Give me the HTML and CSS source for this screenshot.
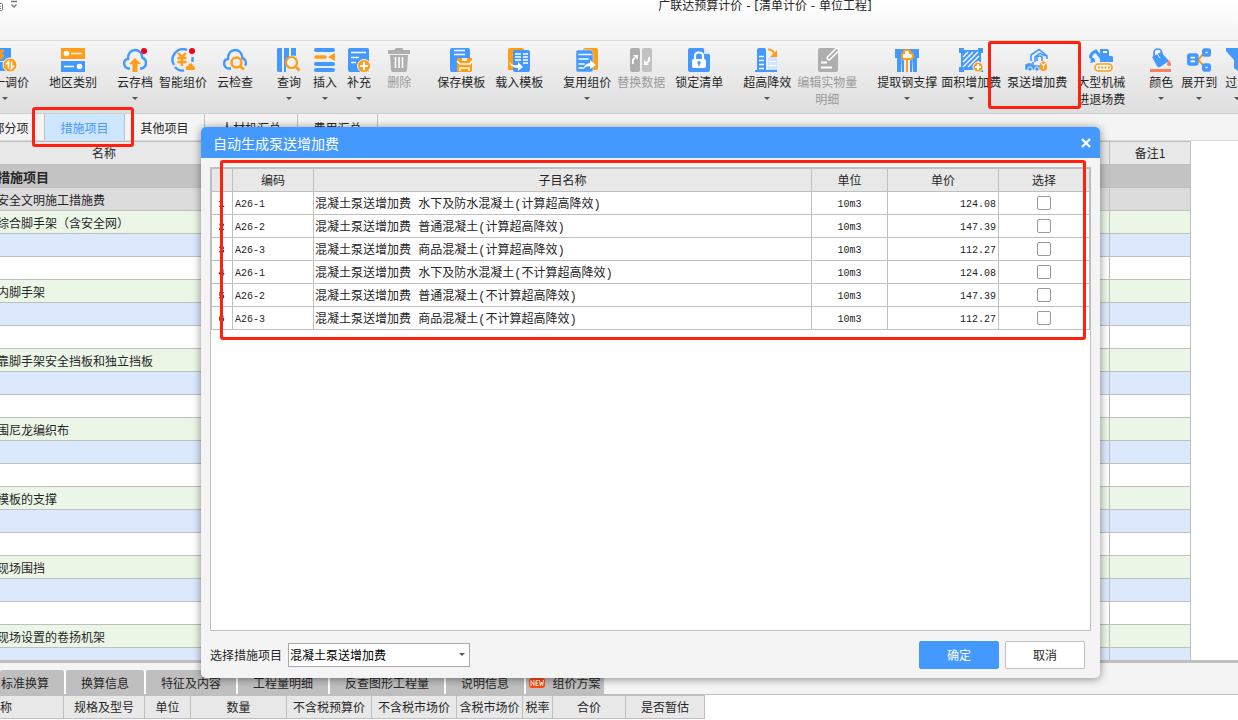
FILE: index.html
```html
<!DOCTYPE html>
<html lang="zh-CN">
<head>
<meta charset="utf-8">
<title>广联达预算计价</title>
<link rel="stylesheet" href="styles.css">
</head>
<body>
<div class="app">
  <header class="titlebar">
    <svg class="quick" width="24" height="12" viewBox="0 0 24 12" fill="none" stroke="#777"><path d="M0 3.500h1.500q1 0 1 1v5q0 1-1 1H0M0 6.500h1M0 8.500h1"/><path d="M11 1.500h6M11.500 4.500l2.500 2.500 2.500-2.500" stroke-width="1.300"/></svg>
    <h1>广联达预算计价 - [清单计价 - 单位工程]</h1>
  </header>

  <nav class="toolbar" aria-label="工具栏">
    <button class="tool first drop"><svg viewBox="0 0 24 24"><path fill="#49f" d="M2 0h16v13H2zM2 14h12v9H2z"/><path d="M4 3h7M4 8h7M8 3v8" stroke="#ff9d17" stroke-width="2.400" fill="none"/><circle cx="17" cy="17" r="7" fill="#ff9d17" stroke="#f3f3f3"/><path d="M15.500 20.500v-7l-2.500 3M18.500 13.500v7l2.500-3" stroke="#fff" stroke-width="1.600" fill="none"/></svg><span>统一调价</span></button>
    <button class="tool g20"><svg viewBox="0 0 24 24"><path fill="#ff9d17" d="M0 0h24v11H0z"/><path fill="#49f" d="M0 13h24v11H0z"/><circle cx="5.500" cy="5.500" r="2.800" fill="#fff"/><circle cx="18.500" cy="18.500" r="2.800" fill="#fff"/><path d="M10 5.500h11M3 18.500h10" stroke="#fff" stroke-width="1.600"/></svg><span>地区类别</span></button>
    <button class="tool g20 drop"><svg viewBox="0 0 24 24"><path d="M7 20.500H5.500C-.5 19 0 11.500 5 11 5 5 8 2 12 2s7 3 7.500 8c4.500 1 5 9-1 10.500H17" fill="none" stroke="#49f" stroke-width="2.400"/><path fill="#ff9d17" d="M12 10l6 6h-3.500v8h-5v-8H6z"/><circle cx="21" cy="3" r="3" fill="#f00012"/></svg><span>云存档</span></button>
    <button class="tool g6"><svg viewBox="0 0 24 24"><g fill="none" stroke="#49f" stroke-width="2.400"><path d="M16 2A10.500 10.500 0 0 0 3 17M4 19a10 10 0 0 0 9 3.500M21.500 9v5"/></g><path d="M7 5l4 4 4-4M6.500 10h9M6.500 14h9M11 9v9" fill="none" stroke="#ff9d17" stroke-width="2.400"/><path fill="#ff9d17" d="M15 22c-1-4 1-4 2-4 1-4 5-3 5 0 3 0 2 4 1 4z"/><circle cx="21" cy="3" r="3" fill="#f00012"/></svg><span>智能组价</span></button>
    <button class="tool g10"><svg viewBox="0 0 24 24"><path d="M8 20.500H5.500C-.5 19 0 11.500 5 11 5 5 8 2 12 2s7 3 7.500 8c3 1 4.500 5 2.500 7.500" fill="none" stroke="#49f" stroke-width="2.400"/><circle cx="13.500" cy="14.500" r="5" fill="none" stroke="#ff9d17" stroke-width="2.400"/><path d="M17 18l4 3.500" stroke="#ff9d17" stroke-width="2.800"/></svg><span>云检查</span></button>
    <button class="tool g24 drop"><svg viewBox="0 0 24 24"><path fill="#49f" d="M0 1q0-1 2-1h3v24H2q-2 0-2-1zM7 0h5v10l-3 5v9H7zM14 0h5v8q-3-1-5 0z"/><circle cx="14.500" cy="14.500" r="5.500" fill="#f3f3f3" stroke="#ff9d17" stroke-width="2.200"/><path d="M18.500 18.500l4 4" stroke="#ff9d17" stroke-width="2.800"/></svg><span>查询</span></button>
    <button class="tool g12 drop"><svg viewBox="0 0 24 24"><path d="M3 2h17M3 16h17M3 22h17" stroke="#49f" stroke-width="4" stroke-linecap="round"/><path d="M3 9h9" stroke="#ff9d17" stroke-width="3.500" stroke-linecap="round"/><path d="M15 9l7-4v8z" fill="#ff9d17"/></svg><span>插入</span></button>
    <button class="tool g10 drop"><svg viewBox="0 0 24 24"><rect x="1" width="21" height="24" rx="2" fill="#49f"/><path d="M4 4.500h15M4 9.500h8M4 14.500h5" stroke="#fff" stroke-width="1.500"/><circle cx="17" cy="18" r="6.500" fill="#ff9d17" stroke="#f3f3f3"/><path d="M13 18h8M17 14v8" stroke="#fff" stroke-width="2"/></svg><span>补充</span></button>
    <button class="tool g16" disabled><svg viewBox="0 0 24 24" fill="#aeaeae"><path d="M1 2h6l2-2h6l2 2h6v4H1zM3 7h18l-1 15q0 2-2 2H6q-2 0-2-2z"/><path d="M8.500 9v11M12 9v11M15.500 9v11" stroke="#fff" stroke-width="1.600"/></svg><span>删除</span></button>
    <button class="tool g26"><svg viewBox="0 0 24 24"><path fill="#49f" d="M1 2q0-2 2-2h16q2 0 2 2v8H9v14H3q-2 0-2-2z"/><path d="M5 2.500h11M5 6.500h11" stroke="#fff" stroke-width="1.600"/><path fill="#ff9d17" d="M8 10h5v3h5v-3h5v7H8zM8 17h15v6l-1 1H9l-1-1z"/><path d="M8 13l3 3h10l2-3M11 23v-3h9v3" stroke="#fff" stroke-width="1.600" fill="none"/></svg><span>保存模板</span></button>
    <button class="tool g10"><svg viewBox="0 0 24 24"><path fill="#ff9d17" d="M1 2q0-2 2-2h12q2 0 2 2v20H1z"/><rect x="6" y="2" width="17" height="22" rx="2" fill="#49f"/><path d="M8 6h6M16 6h5M8 9h6M16 9h5M8 12h6M16 12h5M16 15h5" stroke="#fff" stroke-width="1.700"/><path d="M2 13q2 5 9 4v-3l5 5-5 4v-3Q3 20 2 13z" fill="#fff"/></svg><span>载入模板</span></button>
    <button class="tool g20 drop"><svg viewBox="0 0 24 24"><rect x="8" width="15" height="22" rx="2" fill="#ff9d17"/><path fill="#49f" stroke="#f3f3f3" stroke-width=".5" d="M1 4q0-2 2-2h13l2 2v18q0 2-2 2H3q-2 0-2-2z"/><path d="M4 6.500h12M4 11h9M4 16h5M4 20h4" stroke="#fff" stroke-width="1.600" stroke-linecap="round"/><path d="M8 21q2-6 7-6v-3l6 5-6 4v-3q-4 0-7 3z" fill="#fff"/></svg><span>复用组价</span></button>
    <button class="tool g6" disabled><svg viewBox="0 0 24 24"><rect x="1" width="10" height="24" rx="2" fill="#aeaeae"/><rect x="13" width="10" height="24" rx="2" fill="#c2c2c2"/><path d="M4 16q-1-5 2-6M20 9q1 5-3 6" stroke="#fff" stroke-width="2" fill="none"/><path d="M4 7h5v5zM15 17v-5l5 5z" fill="#fff"/></svg><span>替换数据</span></button>
    <button class="tool g10"><svg viewBox="0 0 24 24"><path fill="#49f" d="M1 2q0-2 2-2h13l7 7v15q0 2-2 2H3q-2 0-2-2z"/><path fill="#d5e8ff" d="M17 0l6 6h-6z"/><rect x="5" y="11" width="14" height="9" rx="2" fill="#fff"/><path d="M8 12V8q0-3.500 4-3.500T16 8v4" fill="none" stroke="#fff" stroke-width="2.200"/><circle cx="12" cy="14.500" r="1.600" fill="#49f"/><path d="M12 15v3" stroke="#49f" stroke-width="1.500"/></svg><span>锁定清单</span></button>
    <button class="tool g20 drop"><svg viewBox="0 0 24 24"><path fill="#49f" d="M2 2q0-2 2-2h5q2 0 2 2v21H2z"/><path d="M4 8.500h5M4 12.500h5M4 16.500h5M4 20.500h5" stroke="#fff" stroke-width="1.600"/><path fill="#cde5ff" d="M13 11q0-2 2-2h5q2 0 2 2v12h-9z"/><path d="M14 13.500h7M14 17.500h7" stroke="#fff"/><path d="M0 23h22" stroke="#49f" stroke-width="2"/><path d="M13 1.500q5 0 6 4" fill="none" stroke="#ff9d17" stroke-width="2"/><path d="M22 2v7h-7z" fill="#ff9d17"/></svg><span>超高降效</span></button>
    <button class="tool g6" disabled><svg viewBox="0 0 24 24"><rect x="3" width="20" height="24" rx="2" fill="#aeaeae"/><path d="M6 14.500h6M6 19.500h11" stroke="#fff" stroke-width="1.800"/><path d="M14 10l8-8" stroke="#fff" stroke-width="5" stroke-linecap="round"/><path d="M14 10l8-8" stroke="#aeaeae" stroke-width="2" stroke-linecap="round"/></svg><span>编辑实物量<br>明细</span></button>
    <button class="tool g20 drop"><svg viewBox="0 0 24 24"><path fill="#49f" d="M0 1h24v9h-2v14h-4V9H6v15H2V10H0z"/><path fill="#49f" d="M6 8l3 5v11H7zM18 8l-3 5v11h2z"/><path d="M7 7q0-2 2-2V3q3-2 6 0v2q3 0 3 3t-3 3H9q-2 0-2-3z" fill="#fff" stroke="#ff9d17" stroke-width="2"/><path d="M12 11v13" stroke="#ff9d17" stroke-width="2"/></svg><span>提取钢支撑</span></button>
    <button class="tool g4 drop"><svg viewBox="0 0 24 24"><path fill="#49f" d="M0 0h5v2h14V0h5v5h-2v14h2v5h-5v-2H5v2H0v-5h2V5H0z"/><path d="M4 9l5-5M4 14L14 4M4 19L19 4M9 19L20 8M14 19l6-6" stroke="#fff" stroke-width="1.400"/><circle cx="19" cy="19" r="5" fill="#ff9d17" stroke="#f0f0f0"/><path d="M16 19h6M19 16v6" stroke="#fff" stroke-width="2"/></svg><span>面积增加费</span></button>
    <button class="tool g6"><svg viewBox="0 0 24 24" fill="none" stroke="#49f" stroke-width="1.600"><path d="M6 13V7l8-5.500L22 8v3M22 8l-5-1.500q-2-2-4 0L10 9v5M12 13V9q3-2 5 0v4"/><path fill="#49f" d="M1 21v-4l2-1h3v2h8v3z"/><path d="M8 14v4"/><circle cx="5" cy="21" r="2.200" fill="#49f" stroke="#f0f0f0" stroke-width="1"/><circle cx="12" cy="21" r="2.200" fill="#49f" stroke="#f0f0f0" stroke-width="1"/><path d="M18.500 13c-6 3-5 10 0 10s5-7 0-10z" fill="#ff9d17" stroke="none"/><path d="M16.500 15.500l2 2 2-2M18.500 17v4" stroke="#fff" stroke-width="1.200"/></svg><span>泵送增加费</span></button>
    <button class="tool g10"><svg viewBox="0 0 24 24"><path fill="#49f" d="M11 1h7q2 0 2 2v5h3q1 0 1 2v4H11z"/><path d="M14 4h4" stroke="#fff" stroke-width="2"/><path d="M13 11L7 3Q2 5 1 10" fill="none" stroke="#49f" stroke-width="3"/><path d="M0 9q7 0 6 5l-5 1q2-3-1-6z" fill="#49f"/><rect x="6" y="16" width="17" height="7" rx="3.500" fill="#fff" stroke="#ff9d17" stroke-width="1.600"/><path d="M9 19.500h12" stroke="#ff9d17" stroke-width="2" stroke-dasharray="2 1.300"/></svg><span>大型机械<br>进退场费</span></button>
    <button class="tool g24 drop"><svg viewBox="0 0 24 24"><path d="M5 10V5q0-4 4-4t4 6" stroke="#49f" stroke-width="1.700" fill="none"/><path fill="#49f" d="M3 9l9-5 8 9-9 6q-2 1-3-1z"/><path d="M7 4l4 6" stroke="#fff"/><path d="M1 22.500h21" stroke="#fb7d62" stroke-width="3"/><path d="M20 12q4 6 0 6t0-6" fill="#fb7d62"/></svg><span>颜色</span></button>
    <button class="tool g8 drop"><svg viewBox="0 0 24 24"><path d="M11 12L18 4M11 12l7 7" stroke="#ff9d17" stroke-width="2"/><g fill="#fff" stroke="#49f" stroke-width="3.600"><rect x="1.800" y="7" width="8" height="9" rx="1"/><rect x="16.800" y="2" width="5.500" height="5" rx="1"/><rect x="16.800" y="17" width="5.500" height="5" rx="1"/></g><path d="M3 11.500h6" stroke="#49f" stroke-width="2"/></svg><span>展开到</span></button>
    <button class="tool g8 drop"><svg viewBox="0 0 24 24"><path fill="#49f" d="M1 0h22v3l-8 9v12l-6-4v-8L1 3z"/></svg><span>过滤</span></button>
  </nav>

  <nav class="tabs" aria-label="页签">
    <button class="tab cut">分部分项</button><button class="tab active">措施项目</button><button class="tab">其他项目</button><button class="tab long">人材机汇总</button><button class="tab">费用汇总</button>
  </nav>

  <main class="sheet">
    <table class="grid">
      <colgroup><col class="c-name"><col><col class="c-note"></colgroup>
      <thead><tr><th>名称</th><th></th><th>备注1</th></tr></thead>
      <tbody>
        <tr class="total"><td>措施项目</td><td></td><td></td></tr>
        <tr class="group"><td>安全文明施工措施费</td><td></td><td></td></tr>
        <tr class="item"><td>综合脚手架（含安全网）</td><td></td><td></td></tr>
        <tr class="sub"><td></td><td></td><td></td></tr>
        <tr><td></td><td></td><td></td></tr>
        <tr class="item"><td>内脚手架</td><td></td><td></td></tr>
        <tr class="sub"><td></td><td></td><td></td></tr>
        <tr><td></td><td></td><td></td></tr>
        <tr class="item"><td>靠脚手架安全挡板和独立挡板</td><td></td><td></td></tr>
        <tr class="sub"><td></td><td></td><td></td></tr>
        <tr><td></td><td></td><td></td></tr>
        <tr class="item"><td>围尼龙编织布</td><td></td><td></td></tr>
        <tr class="sub"><td></td><td></td><td></td></tr>
        <tr><td></td><td></td><td></td></tr>
        <tr class="item"><td>模板的支撑</td><td></td><td></td></tr>
        <tr class="sub"><td></td><td></td><td></td></tr>
        <tr><td></td><td></td><td></td></tr>
        <tr class="item"><td>现场围挡</td><td></td><td></td></tr>
        <tr class="sub"><td></td><td></td><td></td></tr>
        <tr><td></td><td></td><td></td></tr>
        <tr class="item"><td>现场设置的卷扬机架</td><td></td><td></td></tr>
        <tr class="sub"><td></td><td></td><td></td></tr>
      </tbody>
    </table>
  </main>

  <section class="detail">
    <nav class="subtabs" aria-label="明细页签">
      <button class="subtab w-first">标准换算</button><button class="subtab">换算信息</button><button class="subtab w-mid">特征及内容</button><button class="subtab w-mid">工程量明细</button><button class="subtab w-wide">反查图形工程量</button><button class="subtab">说明信息</button><button class="subtab"><svg class="new" width="16" height="10" viewBox="0 0 16 10"><rect width="16" height="10" rx="3" fill="#ff4a0c"/><path d="M2 8V2.500L5 7.500V2M9.500 2.500H7v5h2.500M7 5h2M10.500 2l1 5.500L12.500 4l1 3.500 1-5.500" fill="none" stroke="#fff"/></svg>组价方案</button>
    </nav>
    <table class="columns">
      <colgroup><col class="w126"><col class="w81"><col class="w46"><col class="w96"><col class="w85"><col class="w85"><col class="w66"><col class="w30"><col class="w73"><col class="w79"></colgroup>
      <thead><tr><th>名称</th><th>规格及型号</th><th>单位</th><th>数量</th><th>不含税预算价</th><th>不含税市场价</th><th>含税市场价</th><th>税率</th><th>合价</th><th>是否暂估</th></tr></thead>
    </table>
  </section>

  <div class="dialog" role="dialog" aria-labelledby="dlg-title">
    <div class="dialog-head">
      <h2 id="dlg-title">自动生成泵送增加费</h2>
      <button class="close" aria-label="关闭"><svg width="10" height="10" viewBox="0 0 10 10"><path d="M1 1l8 8M9 1L1 9" stroke="#fff" stroke-width="2.400"/></svg></button>
    </div>
    <div class="dialog-body">
      <div class="panel">
        <table class="fees">
          <colgroup><col class="f-no"><col class="f-code"><col><col class="f-unit"><col class="f-price"><col class="f-pick"></colgroup>
          <thead><tr><th></th><th>编码</th><th>子目名称</th><th>单位</th><th>单价</th><th>选择</th></tr></thead>
          <tbody>
            <tr><td class="no">1</td><td class="mono">A26-1</td><td>混凝土泵送增加费 水下及防水混凝土(计算超高降效)</td><td class="mono mid">10m3</td><td class="mono num">124.08</td><td class="pick"><input type="checkbox" aria-label="选择第1行"></td></tr>
            <tr><td class="no">2</td><td class="mono">A26-2</td><td>混凝土泵送增加费 普通混凝土(计算超高降效)</td><td class="mono mid">10m3</td><td class="mono num">147.39</td><td class="pick"><input type="checkbox" aria-label="选择第2行"></td></tr>
            <tr><td class="no">3</td><td class="mono">A26-3</td><td>混凝土泵送增加费 商品混凝土(计算超高降效)</td><td class="mono mid">10m3</td><td class="mono num">112.27</td><td class="pick"><input type="checkbox" aria-label="选择第3行"></td></tr>
            <tr><td class="no">4</td><td class="mono">A26-1</td><td>混凝土泵送增加费 水下及防水混凝土(不计算超高降效)</td><td class="mono mid">10m3</td><td class="mono num">124.08</td><td class="pick"><input type="checkbox" aria-label="选择第4行"></td></tr>
            <tr><td class="no">5</td><td class="mono">A26-2</td><td>混凝土泵送增加费 普通混凝土(不计算超高降效)</td><td class="mono mid">10m3</td><td class="mono num">147.39</td><td class="pick"><input type="checkbox" aria-label="选择第5行"></td></tr>
            <tr><td class="no">6</td><td class="mono">A26-3</td><td>混凝土泵送增加费 商品混凝土(不计算超高降效)</td><td class="mono mid">10m3</td><td class="mono num">112.27</td><td class="pick"><input type="checkbox" aria-label="选择第6行"></td></tr>
          </tbody>
        </table>
      </div>
      <div class="dialog-foot">
        <label for="measure">选择措施项目</label>
        <span class="picker"><select id="measure"><option>混凝土泵送增加费</option></select></span>
        <button class="btn primary">确定</button>
        <button class="btn">取消</button>
      </div>
    </div>
  </div>

  <div class="mark mark-tab"></div>
  <div class="mark mark-tool"></div>
  <div class="mark mark-list"></div>
</div>
</body>
</html>
```

FILE: styles.css
```css
* { box-sizing: border-box; }

body {
  margin: 0;
  font: 12px/16px "Noto Sans CJK SC", sans-serif;
  color: #262626;
  background: #fff;
}

button {
  font: inherit;
  color: inherit;
  border: 0;
  padding: 0;
  background: none;
}

table {
  border-spacing: 0;
  table-layout: fixed;
}

th, td {
  height: 23px;
  padding: 0 2px;
  border: solid #bfbfbf;
  border-width: 0 1px 1px 0;
  white-space: nowrap;
  overflow: hidden;
}

th {
  background: #e8e8e8;
  font-weight: normal;
}

.app {
  position: relative;
  height: 100vh;
  display: flex;
  flex-direction: column;
  overflow: hidden;
}

/* Title bar */
.titlebar {
  flex: none;
  height: 41px;
  border-bottom: 1px solid #d9d9d9;
  background: linear-gradient(#fff, #f4f4f4);
  display: flex;
  align-items: flex-start;
}

.quick { flex: none; }

.titlebar h1 {
  flex: 1;
  margin: 0;
  padding-left: 268px;
  font: 12px/12px "DejaVu Sans", "Noto Sans CJK SC", sans-serif;
  text-align: center;
}

/* Toolbar */
.toolbar {
  flex: none;
  height: 73px;
  padding-top: 7px;
  display: flex;
  align-items: flex-start;
  overflow: hidden;
  border-bottom: 1px solid #cfcfcf;
  background: linear-gradient(#f5f5f5, #dedede);
}

.tool {
  flex: none;
  display: flex;
  flex-direction: column;
  align-items: center;
  gap: 1px;
  line-height: 17px;
  white-space: nowrap;
}

.tool svg { width: 24px; height: 24px; }
.tool:disabled { color: #9a9a9a; }
.first { margin-left: -19px; }
.g4 { margin-left: 4px; }
.g6 { margin-left: 6px; }
.g8 { margin-left: 8px; }
.g10 { margin-left: 10px; }
.g12 { margin-left: 12px; }
.g16 { margin-left: 16px; }
.g20 { margin-left: 20px; }
.g24 { margin-left: 24px; }
.g26 { margin-left: 26px; }

.drop::after,
.picker::after {
  content: "";
  border: solid transparent;
  border-width: 3px 3px 0;
  border-top-color: #555;
}

.drop::after { margin-top: 6px; }

/* Page tabs */
.tabs {
  flex: none;
  height: 27px;
  display: flex;
  border-bottom: 1px solid #d9d9d9;
  background: #f4f4f4;
}

.tab {
  width: 80px;
  flex: none;
  padding-top: 1px;
  border-right: 1px solid #bfbfbf;
}

.cut { margin-left: -35px; }
.long { width: 93px; }
.active { background: #cce7ff; color: #49f; }

/* Main sheet */
.sheet {
  flex: 1;
  min-height: 0;
  overflow: hidden;
  border-bottom: 3px solid #bfbfbf;
}

.grid {
  width: calc(100% - 47px);
  border-top: 1px solid #bfbfbf;
}

.grid td { padding: 2px 0 0; text-indent: -3px; }
.c-name { width: 209px; }
.c-note { width: 81px; }
.total { background: #c3c3c3; font-size: 13px; font-weight: bold; }
.group { background: #dcdcdc; }
.item { background: #ebf6e6; }
.sub { background: #dce9fd; }

/* Detail area */
.detail { flex: none; padding-bottom: 1px; }

.subtabs {
  height: 32px;
  padding-top: 7px;
  display: flex;
  gap: 2px;
  border-bottom: 1px solid #bfbfbf;
  background: #f4f4f4;
}

.subtab {
  width: 78px;
  flex: none;
  padding-top: 1px;
  background: #bfbfbf;
  box-shadow: 2px 0 #fff;
  border-radius: 2px 2px 0 0;
}

.subtab:last-child { box-shadow: none; }
.w-first { width: 64px; padding-right: 14px; white-space: nowrap; }
.w-mid { width: 90px; }
.w-wide { width: 114px; }
.new { margin-right: 7px; }

.columns {
  width: 768px;
  margin-left: -63px;
  border-top: 1px solid #bfbfbf;
}

.w126 { width: 127px; }
.w81 { width: 81px; }
.w46 { width: 46px; }
.w96 { width: 96px; }
.w85 { width: 85px; }
.w66 { width: 66px; }
.w30 { width: 30px; }
.w73 { width: 73px; }
.w79 { width: 79px; }
.columns th { padding: 0; }

/* Dialog */
.dialog {
  position: absolute;
  inset: 127px 138px 42px 201px;
  display: flex;
  flex-direction: column;
  border-radius: 5px;
  overflow: hidden;
  background: #f4f4f4;
  box-shadow: 0 1px 9px rgba(0, 0, 0, .45);
}

.dialog-head {
  flex: none;
  height: 31px;
  padding: 0 9px 0 12px;
  display: flex;
  align-items: center;
  justify-content: space-between;
  background: #49f;
  color: #fff;
}

.dialog-head h2 {
  margin: 0;
  font-size: 14px;
  line-height: 20px;
  font-weight: normal;
}

.close { display: flex; }

.dialog-body {
  flex: 1;
  min-height: 0;
  padding: 9px 9px 0;
  display: flex;
  flex-direction: column;
}

.panel {
  flex: 1;
  min-height: 0;
  border: 1px solid #bfbfbf;
  background: #fff;
}

.fees {
  width: 100%;
  border: solid #bfbfbf;
  border-width: 1px 0 0 1px;
}

.f-no { width: 21px; }
.f-code { width: 81px; }
.f-unit { width: 76px; }
.f-price { width: 111px; }
.f-pick { width: 91px; }

.fees td {
  padding: 4px 2px 0 1px;
  font-family: "Liberation Mono", "Noto Sans CJK SC", monospace;
}

.fees .mono { padding-left: 2px; font-size: 10px; }
.fees .no { font-size: 10px; font-weight: bold; text-align: center; }
.fees .mid { text-align: center; }
.fees .num { text-align: right; }
.fees .pick { padding: 0; }

.fees input {
  appearance: none;
  display: block;
  width: 14px;
  height: 14px;
  margin: 0 auto;
  border: 1px solid #999;
  border-radius: 2px;
  background: #fff;
}

.dialog-foot {
  flex: none;
  height: 47px;
  padding-right: 6px;
  display: flex;
  align-items: center;
  gap: 6px;
}

.picker {
  flex: none;
  width: 182px;
  display: grid;
  align-items: center;
  margin-right: auto;
}

.picker select,
.picker::after { grid-area: 1 / 1; }

.picker::after {
  justify-self: end;
  margin-right: 5px;
  pointer-events: none;
}

.picker select {
  appearance: none;
  width: 100%;
  height: 24px;
  padding: 0 1px;
  border: 1px solid #aaa;
  border-radius: 0;
  background: #fff;
  color: #000;
  font: inherit;
}

.btn {
  width: 80px;
  height: 28px;
  border: 1px solid #bfbfbf;
  border-radius: 2px;
  background: #fff;
}

.primary {
  border-color: #49f;
  background: #49f;
  color: #fff;
}

/* Annotation frames */
.mark {
  position: absolute;
  border: 3px solid #ff2010;
  border-radius: 3px;
  pointer-events: none;
}

.mark-tab { left: 32px; top: 107px; width: 102px; height: 40px; }
.mark-tool { left: 988px; top: 41px; width: 93px; height: 68px; }
.mark-list { inset: 160px 152px 380px 220px; }
```
